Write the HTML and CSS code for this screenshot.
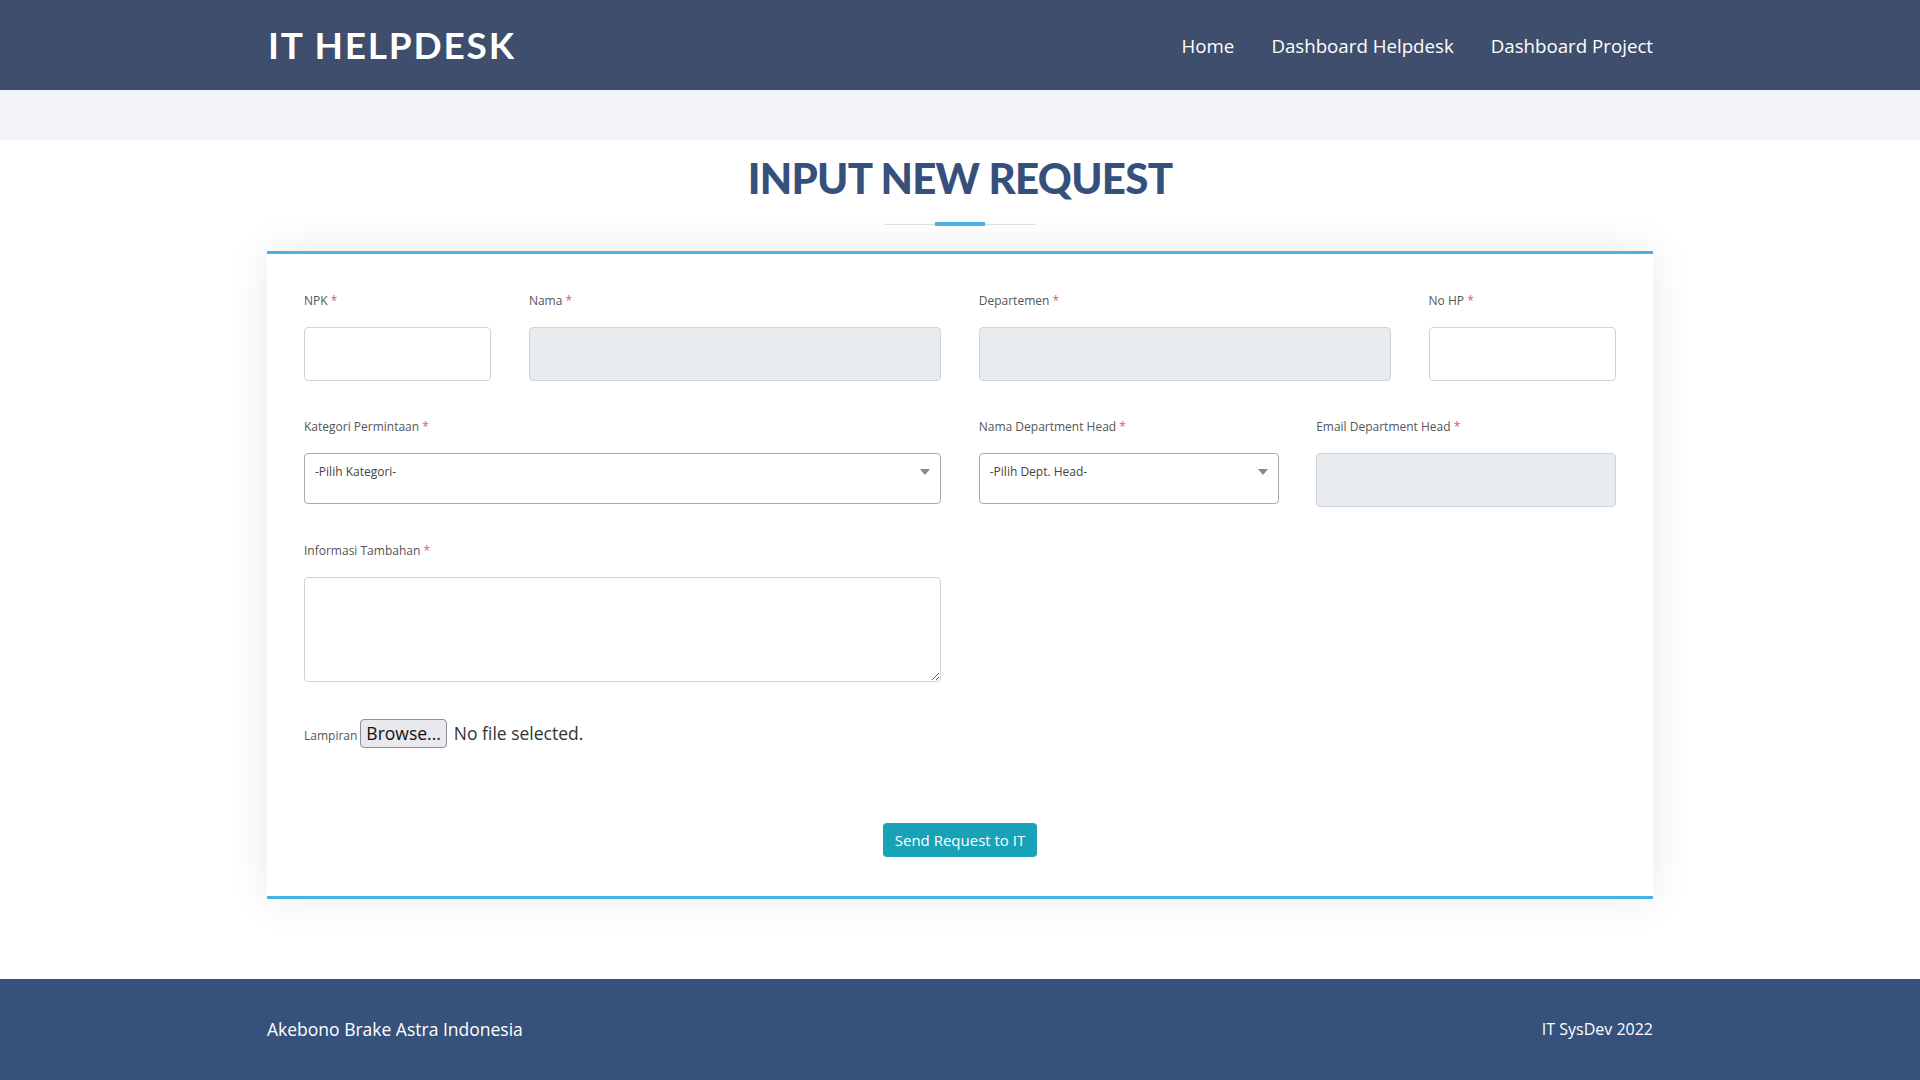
FILE: index.html
```html
<!DOCTYPE html>
<html lang="id">
<head>
<meta charset="utf-8">
<title>IT Helpdesk - Input New Request</title>
<link rel="stylesheet" href="styles.css">
</head>
<body>
<header class="topbar">
  <div class="container topbar-inner">
    <a class="logo" href="#">IT HELPDESK</a>
    <nav class="nav">
      <a href="#">Home</a>
      <a href="#">Dashboard Helpdesk</a>
      <a href="#">Dashboard Project</a>
    </nav>
  </div>
</header>
<div class="band"></div>
<main class="main">
  <div class="section-title">
    <h1>INPUT NEW REQUEST</h1>
    <div class="divider"><span></span></div>
  </div>
  <div class="container">
    <form class="card">
      <div class="row">
        <div class="field col-2">
          <label>NPK <span class="req">*</span></label>
          <input class="control" type="text">
        </div>
        <div class="field col-4">
          <label>Nama <span class="req">*</span></label>
          <input class="control" type="text" disabled>
        </div>
        <div class="field col-4">
          <label>Departemen <span class="req">*</span></label>
          <input class="control" type="text" disabled>
        </div>
        <div class="field col-2">
          <label>No HP <span class="req">*</span></label>
          <input class="control" type="text">
        </div>
      </div>
      <div class="row row2">
        <div class="field col-6">
          <label>Kategori Permintaan <span class="req">*</span></label>
          <div class="select"><span>-Pilih Kategori-</span><i class="arrow"></i></div>
        </div>
        <div class="field col-3">
          <label>Nama Department Head <span class="req">*</span></label>
          <div class="select"><span>-Pilih Dept. Head-</span><i class="arrow"></i></div>
        </div>
        <div class="field col-3">
          <label>Email Department Head <span class="req">*</span></label>
          <input class="control" type="text" disabled>
        </div>
      </div>
      <div class="row row3">
        <div class="field col-6">
          <label>Informasi Tambahan <span class="req">*</span></label>
          <textarea class="control area"></textarea>
        </div>
      </div>
      <div class="file-row">
        <span class="small-label">Lampiran</span>
        <button type="button" class="browse">Browse...</button>
        <span class="nofile">No file selected.</span>
      </div>
      <div class="actions">
        <button type="button" class="btn-send">Send Request to IT</button>
      </div>
    </form>
  </div>
</main>
<footer class="footer">
  <div class="container footer-inner">
    <span class="foot-left">Akebono Brake Astra Indonesia</span>
    <span class="foot-right">IT SysDev 2022</span>
  </div>
</footer>
</body>
</html>
```
FILE: styles.css
```css
* { box-sizing: border-box; }
html, body { margin: 0; padding: 0; }
body {
  font-family: "Open Sans", "Liberation Sans", sans-serif;
  color: #444;
  background: #fff;
  width: 1920px;
  min-height: 1080px;
  display: flex;
  flex-direction: column;
}
.container { width: 1386px; margin: 0 auto; }

.topbar { background: #3e4e6c; height: 90px; }
.topbar-inner { height: 90px; display: flex; align-items: center; justify-content: space-between; }
.logo {
  font-family: Lato, "Open Sans", sans-serif;
  font-weight: 700;
  font-size: 37px;
  letter-spacing: 1.8px;
  color: #fff;
  text-decoration: none;
  padding-left: 1px;
  margin-top: -2px;
}
.nav { display: flex; gap: 37px; }
.nav a { color: #fff; text-decoration: none; font-size: 18.7px; }

.band { height: 50px; background: #f3f4f9; }

.main { flex: 1; padding-bottom: 80px; }
.section-title { text-align: center; padding-top: 13px; }
.section-title h1 {
  margin: 0;
  font-family: Lato, "Open Sans", sans-serif;
  font-weight: 900;
  font-size: 42px;
  line-height: 50px;
  letter-spacing: -0.7px;
  color: #36507c;
}
.divider {
  width: 150px; height: 4px; margin: 19px auto 25px;
  position: relative; display: flex; align-items: center; justify-content: center;
}
.divider::before { content: ""; position: absolute; left: 0; right: 0; top: 2px; height: 1px; background: #dddddd; }
.divider span { position: relative; width: 50px; height: 4px; background: #47b2e4; }

.card {
  background: #fff;
  border-top: 3px solid #47b2e4;
  border-bottom: 3px solid #47b2e4;
  box-shadow: 0 0 40px rgba(0, 0, 0, 0.09);
  padding: 38px 37px 39px;
  margin: 0;
}
.row { display: grid; grid-template-columns: repeat(12, 1fr); column-gap: 37.5px; }
.row2 { margin-top: 37px; }
.row3 { margin-top: 35px; }
.col-2 { grid-column: span 2; }
.col-3 { grid-column: span 3; }
.col-4 { grid-column: span 4; }
.col-6 { grid-column: span 6; }
.field { display: flex; flex-direction: column; align-items: stretch; }
.field label { font-size: 12px; line-height: 18px; color: #555; margin-bottom: 17px; }
.req { color: #ec4d7a; }
.control {
  height: 54px;
  border: 1px solid #ced4da;
  border-radius: 4px;
  background: #fff;
  font: inherit;
  width: 100%;
}
.control:disabled { background: #e9ecef; }
.area { height: 105px; resize: vertical; }

.select {
  position: relative;
  height: 51px;
  border: 1px solid #aaa;
  border-radius: 4px;
  background: #fff;
  padding: 9px 10px 8px;
  font-size: 12px;
  line-height: 17px;
  color: #444;
}
.select .arrow {
  position: absolute;
  right: 10px; top: 15px;
  width: 0; height: 0;
  border-left: 5px solid transparent;
  border-right: 5px solid transparent;
  border-top: 6px solid #888;
}

.file-row { display: flex; align-items: baseline; gap: 3px; margin-top: 37px; }
.small-label { font-size: 12px; color: #555; }
.browse {
  font-family: "Open Sans", sans-serif;
  font-size: 17.5px;
  line-height: 23px;
  height: 29px;
  padding: 0 5px;
  background: #e9e9ed;
  border: 1px solid #8f8f9d;
  border-radius: 4px;
  color: #111;
}
.nofile { font-size: 17.5px; color: #333; margin-left: 4px; }

.actions { display: flex; justify-content: center; margin-top: 75px; }
.btn-send {
  background: #17a2b8;
  color: #fff;
  border: 0;
  border-radius: 4px;
  font-family: "Open Sans", sans-serif;
  font-size: 15px;
  height: 34px;
  width: 154px;
  padding: 0;
}

.footer { background: #36517c; height: 101px; }
.footer-inner { height: 101px; display: flex; align-items: center; justify-content: space-between; color: #fff; padding-bottom: 2px; }
.foot-left { font-size: 17.5px; }
.foot-right { font-size: 16px; }
```
